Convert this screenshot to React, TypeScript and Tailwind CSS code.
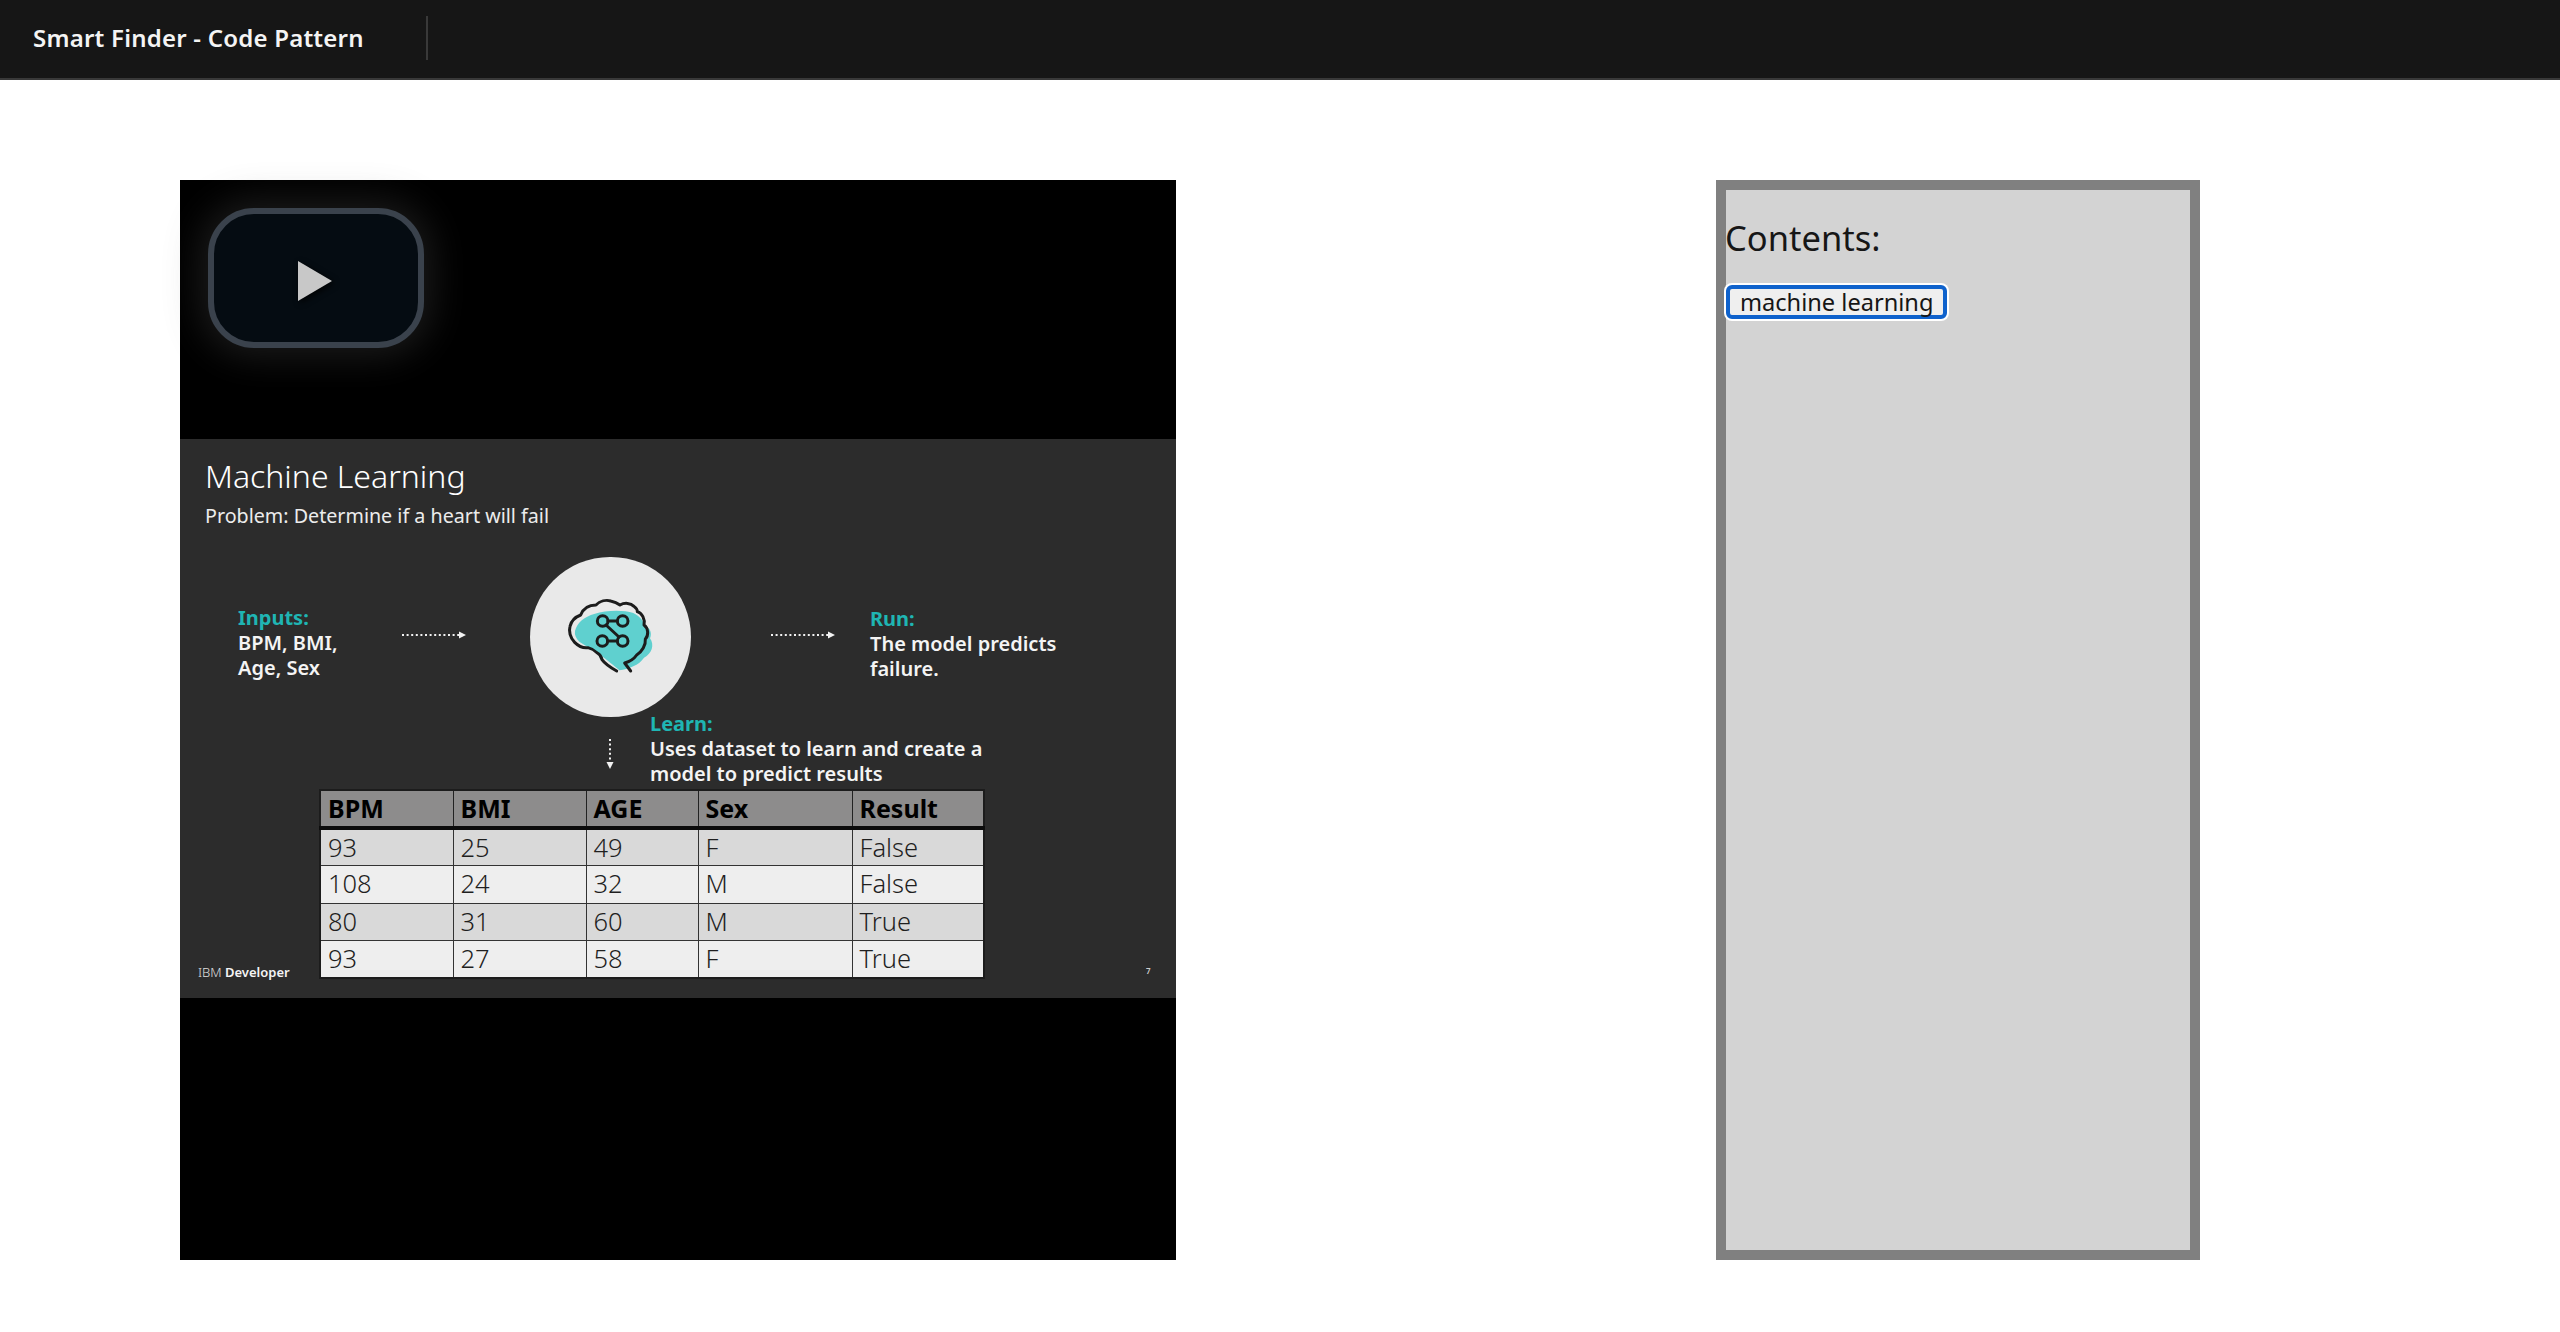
const plex = "font-['Noto_Sans','Open_Sans',sans-serif]";

const tableHead = ['BPM', 'BMI', 'AGE', 'Sex', 'Result'];
const tableRows = [
  ['93', '25', '49', 'F', 'False'],
  ['108', '24', '32', 'M', 'False'],
  ['80', '31', '60', 'M', 'True'],
  ['93', '27', '58', 'F', 'True'],
];

function DottedArrow() {
  return (
    <svg width="66" height="10" viewBox="0 0 66 10" className="block">
      <line x1="1" y1="5" x2="58" y2="5" stroke="#f2f2f2" strokeWidth="2" strokeDasharray="2 2.6" />
      <polygon points="58,1.5 65,5 58,8.5" fill="#f2f2f2" />
    </svg>
  );
}

function DownArrow() {
  return (
    <svg width="10" height="32" viewBox="0 0 10 32" className="block">
      <line x1="5" y1="1" x2="5" y2="24" stroke="#f2f2f2" strokeWidth="2" strokeDasharray="2 2.6" />
      <polygon points="1.5,24 8.5,24 5,31" fill="#f2f2f2" />
    </svg>
  );
}

function BrainIcon() {
  return (
    <svg width="160" height="160" viewBox="30 18 480 480" className="block">
      <path
        d="M165 240 C172 215 190 198 225 188 C255 178 310 176 340 186 C362 196 372 215 378 226 C392 232 396 250 390 262 C404 282 396 308 372 320 C358 342 325 354 298 358 C280 342 262 330 240 310 C222 294 200 288 178 272 C168 262 163 252 165 240 Z"
        fill="#5fd0cf"
      />
      <path
        d="M290 360 C272 350 256 340 246 326 C244 316 240 310 232 306 C222 296 212 292 204 290 C190 292 176 286 164 274 C150 260 146 240 150 226 C154 210 166 198 182 192 C190 172 206 162 228 162 C240 150 258 146 272 150 C282 152 292 156 300 162 C314 154 332 156 342 166 C350 172 352 178 352 182 C366 186 376 204 372 222 C386 232 386 254 376 264 C378 282 366 302 350 312 C342 324 328 332 314 336 L332 360"
        fill="none"
        stroke="#1c1c1c"
        strokeWidth="9"
        strokeLinecap="round"
        strokeLinejoin="round"
      />
      <g fill="none" stroke="#1c1c1c" strokeWidth="9" strokeLinecap="round">
        <circle cx="248" cy="210" r="16" />
        <circle cx="308" cy="210" r="16" />
        <circle cx="247" cy="270" r="16" />
        <circle cx="308" cy="270" r="16" />
        <line x1="264" y1="210" x2="292" y2="210" />
        <line x1="263" y1="270" x2="292" y2="270" />
        <line x1="258" y1="222" x2="297" y2="258" />
      </g>
    </svg>
  );
}

function SlideLabel({ title, lines }: { title: string; lines: string[] }) {
  return (
    <div className="text-[20px] leading-[25px] font-semibold whitespace-nowrap">
      <div className="font-bold text-[#1fb5b3]">{title}</div>
      {lines.map((line) => (
        <div key={line} className="text-[#f4f4f4]">
          {line}
        </div>
      ))}
    </div>
  );
}

function Slide() {
  return (
    <div className="relative h-[559px] bg-[#2c2c2c] flex flex-col">
      <div className="pl-[25px] pt-[17px]">
        <div className="text-[32px] leading-[40px] font-light text-white">Machine Learning</div>
        <div className="mt-[7px] text-[19.7px] leading-[26px] font-normal text-[#ececec]">Problem: Determine if a heart will fail</div>
      </div>

      <div className="mt-[28px] flex items-start">
        <div className="ml-[58px] w-[163px] mt-[48px]">
          <SlideLabel title="Inputs:" lines={['BPM, BMI,', 'Age, Sex']} />
        </div>
        <div className="mt-[73px]">
          <DottedArrow />
        </div>
        <div className="ml-[63px] w-[161px] h-[160px] rounded-full bg-[#e9e9e9]">
          <BrainIcon />
        </div>
        <div className="ml-[79px] mt-[73px]">
          <DottedArrow />
        </div>
        <div className="ml-[34px] mt-[49px]">
          <SlideLabel title="Run:" lines={['The model predicts', 'failure.']} />
        </div>
      </div>

      <div className="-mt-[6px] flex items-start">
        <div className="ml-[425px] mt-[27px]">
          <DownArrow />
        </div>
        <div className="ml-[35px]">
          <SlideLabel title="Learn:" lines={['Uses dataset to learn and create a', 'model to predict results']} />
        </div>
      </div>

      <table className="mt-[3px] ml-[139px] w-[666px] table-fixed border-collapse border-2 border-[#1c1c1c] text-[25.5px]">
        <colgroup>
          <col className="w-[133px]" />
          <col className="w-[133px]" />
          <col className="w-[112px]" />
          <col className="w-[154px]" />
          <col />
        </colgroup>
        <thead>
          <tr className="h-[38px] bg-[#8d8c8c] border-b-[4px] border-[#0c0c0c]">
            {tableHead.map((cell) => (
              <th key={cell} className="border-x border-[#222] px-[7px] pt-0 pb-[2px] text-left text-[25px] font-bold leading-[30px] text-black">
                {cell}
              </th>
            ))}
          </tr>
        </thead>
        <tbody>
          {tableRows.map((row, i) => (
            <tr key={i} className={i % 2 === 0 ? 'h-[37.5px] bg-[#d9d9d9]' : 'h-[37.5px] bg-[#eeeeee]'}>
              {row.map((cell, j) => (
                <td key={j} className="border border-[#333] px-[7px] pt-0 pb-[2px] font-light leading-[30px] text-[#1f1f1f]">
                  {cell}
                </td>
              ))}
            </tr>
          ))}
        </tbody>
      </table>

      <div className="absolute left-[18px] top-[524px] text-[13px] leading-[18px] text-[#e0e0e0] whitespace-nowrap">
        <span className="font-light">IBM </span>
        <span className="font-semibold text-[#f4f4f4]">Developer</span>
      </div>
      <div className="absolute left-[966px] top-[527px] text-[8px] leading-[10px] font-semibold text-[#cfcfcf]">7</div>
    </div>
  );
}

export default function App() {
  return (
    <div className={`${plex} min-h-screen bg-white`}>
      <header className="h-[80px] bg-[#161616] border-b-2 border-[#393939] flex items-center">
        <div className="pl-[33px] w-[426px] -mt-[2px] text-[24px] leading-[32px] tracking-[0.22px] font-semibold text-[#f4f4f4] whitespace-nowrap">Smart Finder - Code Pattern</div>
        <div className="w-[2px] h-[44px] -mt-[2px] bg-[#393939]" />
      </header>

      <main className="pt-[100px] pl-[180px] flex gap-[540px]">
        <div className="w-[996px] h-[1080px] bg-black flex flex-col">
          <div className="h-[259px] pl-[28px] pt-[28px]">
            <button className="w-[216px] h-[140px] rounded-[46px] border-[6px] border-[#3a424c] bg-[#050c12] shadow-[0_0_36px_8px_rgba(90,90,90,0.3)] flex items-center justify-center">
              <svg width="40" height="48" viewBox="0 0 40 48" className="ml-[-2px] mt-[6px] drop-shadow-[2px_2px_3px_rgba(0,0,0,0.9)]">
                <polygon points="3,4 37,24 3,44" fill="#c8c8c8" />
              </svg>
            </button>
          </div>
          <Slide />
        </div>

        <aside className="w-[484px] h-[1080px] border-[10px] border-[#808080] bg-[#d3d3d3]">
          <h2 className="mt-[25px] -ml-[1px] text-[34.5px] leading-[46px] font-normal text-[#161616]">Contents:</h2>
          <button className="mt-[24px] block h-[34px] rounded-[6px] border-[4px] border-[#0f62cc] bg-[#efefef] px-[10px] text-[23.6px] leading-[24px] text-[#161616] shadow-[0_0_0_2px_#ffffff] whitespace-nowrap">
            machine learning
          </button>
        </aside>
      </main>
    </div>
  );
}
